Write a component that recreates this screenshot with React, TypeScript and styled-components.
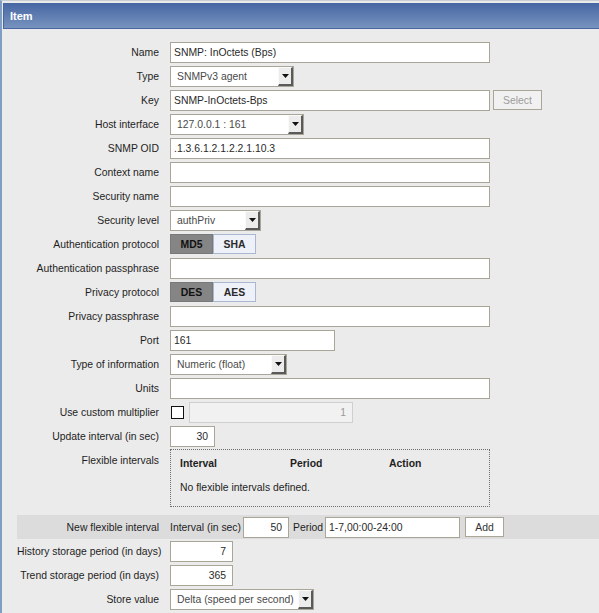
import React from "react";
import styled, { createGlobalStyle } from "styled-components";

const FS = "10.4px";

const Global = createGlobalStyle`
  html, body { margin: 0; padding: 0; background: #ebebeb; }
  body { font-family: "Liberation Sans", Arial, sans-serif; font-size: ${FS}; color: #1e1e1e; }
`;

const Page = styled.div`
  min-height: 613px;
  background: #ebebeb;
  border-left: 2px solid #809ec4;
  border-top: 1px solid #c8cdd6;
  padding-top: 2px;
  box-sizing: border-box;
  overflow: hidden;
`;

const Header = styled.div`
  margin-left: 1px;
  height: 26px;
  box-sizing: border-box;
  border: 1px solid #4866a2;
  border-right: none;
  background: linear-gradient(#4868a5, #7793be);
  color: #fff;
  font-weight: bold;
  font-size: 11px;
  display: flex;
  align-items: center;
  padding: 0 0 1px 6px;
`;

const Form = styled.div`
  margin-left: 15px;
  padding-top: 11px;
  display: flex;
  flex-direction: column;
`;

const Row = styled.div<{ $shade?: boolean; $top?: boolean }>`
  display: grid;
  grid-template-columns: 142px 1fr;
  column-gap: 11px;
  align-items: ${(p) => (p.$top ? "start" : "center")};
  min-height: 24px;
  background: ${(p) => (p.$shade ? "#dcdcdc" : "transparent")};
`;

const Label = styled.div<{ $pad?: number }>`
  text-align: right;
  white-space: nowrap;
  font-size: ${FS};
  color: #1e1e1e;
  padding-top: ${(p) => p.$pad ?? 0}px;
`;

const Cell = styled.div<{ $gap?: number }>`
  display: flex;
  align-items: center;
  gap: ${(p) => p.$gap ?? 3}px;
`;

const Input = styled.div<{ $w: number; $right?: boolean; $disabled?: boolean }>`
  width: ${(p) => p.$w}px;
  height: 21px;
  box-sizing: border-box;
  border: 1px solid ${(p) => (p.$disabled ? "#cfcfcf" : "#a9a697")};
  background: ${(p) => (p.$disabled ? "#f1f1f1" : "#fff")};
  color: ${(p) => (p.$disabled ? "#9a9a9a" : "#2a2a2a")};
  padding: 0 ${(p) => (p.$right ? 6 : 3)}px 0 3px;
  display: flex;
  align-items: center;
  justify-content: ${(p) => (p.$right ? "flex-end" : "flex-start")};
  font-size: ${FS};
  white-space: nowrap;
`;

const SelectBox = styled.div<{ $w: number }>`
  width: ${(p) => p.$w}px;
  height: 21px;
  box-sizing: border-box;
  border: 1px solid #a9a697;
  background: #fff;
  color: #4a4a4a;
  display: flex;
  align-items: stretch;
  font-size: ${FS};
`;

const SelectText = styled.div`
  flex: 1;
  display: flex;
  align-items: center;
  padding-left: 6px;
  white-space: nowrap;
  overflow: hidden;
`;

const ArrowButton = styled.div`
  width: 12px;
  background: #ececec;
  border-left: 1px solid #fafafa;
  border-top: 1px solid #fafafa;
  border-right: 2px solid #5a5a5a;
  border-bottom: 2px solid #5a5a5a;
  display: flex;
  align-items: center;
  justify-content: center;
`;

const Button = styled.div<{ $w: number; $muted?: boolean; $ml?: number }>`
  width: ${(p) => p.$w}px;
  height: 20px;
  box-sizing: border-box;
  margin-left: ${(p) => p.$ml ?? 0}px;
  border: 1px solid #a9a697;
  background: ${(p) => (p.$muted ? "#f1f1f1" : "#fff")};
  color: ${(p) => (p.$muted ? "#9c9c9c" : "#333")};
  display: flex;
  align-items: center;
  justify-content: center;
  font-size: ${FS};
`;

const Toggle = styled.div`
  display: flex;
`;

const ToggleBtn = styled.div<{ $on?: boolean }>`
  width: 43px;
  height: 20px;
  box-sizing: border-box;
  border: 1px solid ${(p) => (p.$on ? "#7a7a7a" : "#a9b8d0")};
  background: ${(p) => (p.$on ? "#858585" : "#eef1f7")};
  color: ${(p) => (p.$on ? "#111" : "#2a2a2a")};
  font-weight: bold;
  font-size: ${FS};
  display: flex;
  align-items: center;
  justify-content: center;
`;

const Check = styled.div`
  width: 13px;
  height: 13px;
  box-sizing: border-box;
  border: 1px solid #111;
  background: #fff;
  margin: 0 2px 0 1px;
`;

const FlexBox = styled.div`
  width: 320px;
  height: 58px;
  box-sizing: border-box;
  border: 1px dotted #6e6e6e;
  margin: 1px 0 8px;
  padding: 6px 0 0 9px;
  display: grid;
  grid-template-columns: 110px 99px 1fr;
  grid-template-rows: 14px 24px;
  row-gap: 5px;
  align-items: center;
  font-size: ${FS};
`;

const FlexHead = styled.div`
  font-weight: bold;
`;

const FlexEmpty = styled.div`
  grid-column: 1 / -1;
`;

const InlineText = styled.span<{ $ml?: number }>`
  font-size: ${FS};
  color: #1e1e1e;
  white-space: nowrap;
  margin-left: ${(p) => p.$ml ?? 0}px;
`;

const Arrow = () => (
  <svg width="7" height="4" viewBox="0 0 7 4">
    <path d="M0 0H7L3.5 4Z" fill="#111" />
  </svg>
);

const Select = ({ w, text }: { w: number; text: string }) => (
  <SelectBox $w={w}>
    <SelectText>{text}</SelectText>
    <ArrowButton>
      <Arrow />
    </ArrowButton>
  </SelectBox>
);

export default function App() {
  return (
    <>
      <Global />
      <Page>
        <Header>Item</Header>
        <Form>
          <Row>
            <Label>Name</Label>
            <Cell><Input $w={320}>SNMP: InOctets (Bps)</Input></Cell>
          </Row>
          <Row>
            <Label>Type</Label>
            <Cell><Select w={124} text="SNMPv3 agent" /></Cell>
          </Row>
          <Row>
            <Label>Key</Label>
            <Cell>
              <Input $w={320}>SNMP-InOctets-Bps</Input>
              <Button $w={49} $muted>Select</Button>
            </Cell>
          </Row>
          <Row>
            <Label>Host interface</Label>
            <Cell><Select w={134} text="127.0.0.1 : 161" /></Cell>
          </Row>
          <Row>
            <Label>SNMP OID</Label>
            <Cell><Input $w={320}>.1.3.6.1.2.1.2.2.1.10.3</Input></Cell>
          </Row>
          <Row>
            <Label>Context name</Label>
            <Cell><Input $w={320} /></Cell>
          </Row>
          <Row>
            <Label>Security name</Label>
            <Cell><Input $w={320} /></Cell>
          </Row>
          <Row>
            <Label>Security level</Label>
            <Cell><Select w={91} text="authPriv" /></Cell>
          </Row>
          <Row>
            <Label>Authentication protocol</Label>
            <Cell>
              <Toggle>
                <ToggleBtn $on>MD5</ToggleBtn>
                <ToggleBtn>SHA</ToggleBtn>
              </Toggle>
            </Cell>
          </Row>
          <Row>
            <Label>Authentication passphrase</Label>
            <Cell><Input $w={320} /></Cell>
          </Row>
          <Row>
            <Label>Privacy protocol</Label>
            <Cell>
              <Toggle>
                <ToggleBtn $on>DES</ToggleBtn>
                <ToggleBtn>AES</ToggleBtn>
              </Toggle>
            </Cell>
          </Row>
          <Row>
            <Label>Privacy passphrase</Label>
            <Cell><Input $w={320} /></Cell>
          </Row>
          <Row>
            <Label>Port</Label>
            <Cell><Input $w={165}>161</Input></Cell>
          </Row>
          <Row>
            <Label>Type of information</Label>
            <Cell><Select w={117} text="Numeric (float)" /></Cell>
          </Row>
          <Row>
            <Label>Units</Label>
            <Cell><Input $w={320} /></Cell>
          </Row>
          <Row>
            <Label>Use custom multiplier</Label>
            <Cell>
              <Check />
              <Input $w={164} $right $disabled>1</Input>
            </Cell>
          </Row>
          <Row>
            <Label>Update interval (in sec)</Label>
            <Cell><Input $w={45} $right>30</Input></Cell>
          </Row>
          <Row $top>
            <Label $pad={7}>Flexible intervals</Label>
            <FlexBox>
              <FlexHead>Interval</FlexHead>
              <FlexHead>Period</FlexHead>
              <FlexHead>Action</FlexHead>
              <FlexEmpty>No flexible intervals defined.</FlexEmpty>
            </FlexBox>
          </Row>
          <Row $shade>
            <Label>New flexible interval</Label>
            <Cell $gap={2}>
              <InlineText>Interval (in sec)</InlineText>
              <Input $w={46} $right>50</Input>
              <InlineText $ml={2}>Period</InlineText>
              <Input $w={135}>1-7,00:00-24:00</Input>
              <Button $w={39} $ml={3}>Add</Button>
            </Cell>
          </Row>
          <Row>
            <Label>History storage period (in days)</Label>
            <Cell><Input $w={63} $right>7</Input></Cell>
          </Row>
          <Row>
            <Label>Trend storage period (in days)</Label>
            <Cell><Input $w={63} $right>365</Input></Cell>
          </Row>
          <Row>
            <Label>Store value</Label>
            <Cell><Select w={144} text="Delta (speed per second)" /></Cell>
          </Row>
        </Form>
      </Page>
    </>
  );
}
